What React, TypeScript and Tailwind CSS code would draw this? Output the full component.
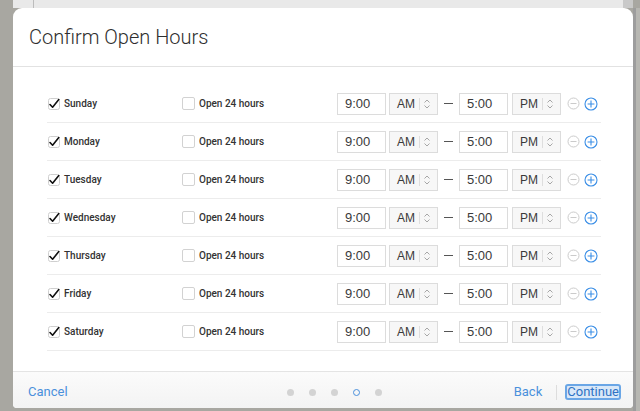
import React from "react"

const days = ["Sunday", "Monday", "Tuesday", "Wednesday", "Thursday", "Friday", "Saturday"]

function DayCheck() {
  return (
    <svg width="14" height="14" viewBox="0 0 14 14" className="shrink-0">
      <rect x="1.5" y="1.5" width="11" height="11" rx="2" fill="white" stroke="#cfcfcf" />
      <polyline points="3,7.5 5.6,10.2 11.8,2.6" fill="none" stroke="#111" strokeWidth="1.6" strokeLinecap="round" strokeLinejoin="round" />
    </svg>
  )
}

function Chevrons() {
  return (
    <svg width="8" height="12" viewBox="0 0 8 12">
      <path d="M1.5 4.5 L4 2 L6.5 4.5" fill="none" stroke="#a6a6a6" strokeWidth="1" />
      <path d="M1.5 7.5 L4 10 L6.5 7.5" fill="none" stroke="#a6a6a6" strokeWidth="1" />
    </svg>
  )
}

function TimeBox({ value }: { value: string }) {
  return (
    <div className="w-[49px] h-[22px] border border-[#dcdcdc] bg-white flex items-center pl-[7px] text-[13px] text-[#3a3a3a] font-['Liberation_Sans',Arial,sans-serif]">
      {value}
    </div>
  )
}

function Meridiem({ value }: { value: string }) {
  return (
    <div className="w-[49px] h-[22px] border border-[#dcdcdc] bg-[#f7f7f7] flex items-center pl-[7px] text-[12px] text-[#3a3a3a] font-['Liberation_Sans',Arial,sans-serif]">
      <span>{value}</span>
      <span className="w-px h-[12px] bg-[#dedede] ml-[4px] mr-[3px]" />
      <Chevrons />
    </div>
  )
}

function Row({ day }: { day: string }) {
  return (
    <div className="h-[38px] border-b border-[#ececec] flex items-center text-[10px] font-medium text-[#333] font-['Roboto',Arial,sans-serif]">
      <div className="w-[135px] flex items-center">
        <DayCheck />
        <span className="ml-[3px]">{day}</span>
      </div>
      <div className="w-[155px] flex items-center">
        <span className="w-[13px] h-[13px] border border-[#d2d2d2] rounded-[2px] bg-white" />
        <span className="ml-[4px]">Open 24 hours</span>
      </div>
      <TimeBox value="9:00" />
      <div className="ml-[3px]">
        <Meridiem value="AM" />
      </div>
      <div className="w-[21px] flex justify-center">
        <span className="w-[9px] h-[1.5px] bg-[#555]" />
      </div>
      <TimeBox value="5:00" />
      <div className="ml-[4px]">
        <Meridiem value="PM" />
      </div>
      <svg width="13" height="13" viewBox="0 0 13 13" className="ml-[6px]">
        <circle cx="6.5" cy="6.5" r="5.5" fill="none" stroke="#cbcbcb" strokeWidth="1" />
        <path d="M3.5 6.5 H9.5" stroke="#cbcbcb" strokeWidth="1" />
      </svg>
      <svg width="14" height="14" viewBox="0 0 14 14" className="ml-[4px]">
        <circle cx="7" cy="7" r="6" fill="none" stroke="#3a8ee6" strokeWidth="1.1" />
        <path d="M3.6 7 H10.4 M7 3.6 V10.4" stroke="#3a8ee6" strokeWidth="1.1" />
      </svg>
    </div>
  )
}

export default function App() {
  return (
    <div className="w-[640px] h-[411px] bg-[#a8a7a1] flex flex-col overflow-hidden">
      <div className="h-[8px] flex shrink-0">
        <div className="w-[13px]" />
        <div className="w-[20px] bg-[#e9e9e9]" />
        <div className="w-px bg-[#bcbcbc]" />
        <div className="flex-1 bg-[#e9e9e9]" />
        <div className="w-[10px] bg-[#c9c9c9]" />
        <div className="w-[7px]" />
      </div>
      <div className="flex flex-1 min-h-0">
        <div className="w-[13px] shrink-0" />
        <div className="w-[620px] h-[400px] bg-white rounded-t-[9px] rounded-b-[4px] flex flex-col overflow-hidden shrink-0">
          <div className="h-[59px] border-b border-[#e2e2e2] flex items-center pl-[16px] shrink-0">
            <h1 className="text-[20px] font-light text-[#2e2e2e] font-['Roboto',Arial,sans-serif]">Confirm Open Hours</h1>
          </div>
          <div className="pt-[18px] pl-[34px] pr-[32px] h-[304px] shrink-0">
            {days.map((d) => (
              <Row key={d} day={d} />
            ))}
          </div>
          <div className="flex-1 border-t border-[#e4e4e4] bg-gradient-to-b from-[#fbfbfb] to-[#f3f3f3] flex items-center pt-[4px] pl-[15px] pr-[12px] text-[13px] font-['Roboto',Arial,sans-serif]">
            <div className="w-[259px] text-[#4a90dc]">Cancel</div>
            <div className="flex items-center gap-[15px]">
              <span className="w-[7px] h-[7px] rounded-full bg-[#d3d3d3]" />
              <span className="w-[7px] h-[7px] rounded-full bg-[#d3d3d3]" />
              <span className="w-[7px] h-[7px] rounded-full bg-[#d3d3d3]" />
              <span className="w-[7px] h-[7px] rounded-full border border-[#4a90dc]" />
              <span className="w-[7px] h-[7px] rounded-full bg-[#d3d3d3]" />
            </div>
            <div className="flex-1" />
            <span className="text-[#4a90dc]">Back</span>
            <span className="w-px h-[15px] bg-[#dddddd] ml-[14px] mr-[8px]" />
            <span className="border-2 border-[#6aa6e6] bg-[#d9e8f8] rounded-[3px] leading-[12px] text-[#2f72c4]">Continue</span>
          </div>
        </div>
        <div className="flex-1 flex">
          <div className="w-[3px] bg-[#9d9d9d]" />
          <div className="flex-1 bg-[#b7b7b2]" />
        </div>
      </div>
    </div>
  )
}
